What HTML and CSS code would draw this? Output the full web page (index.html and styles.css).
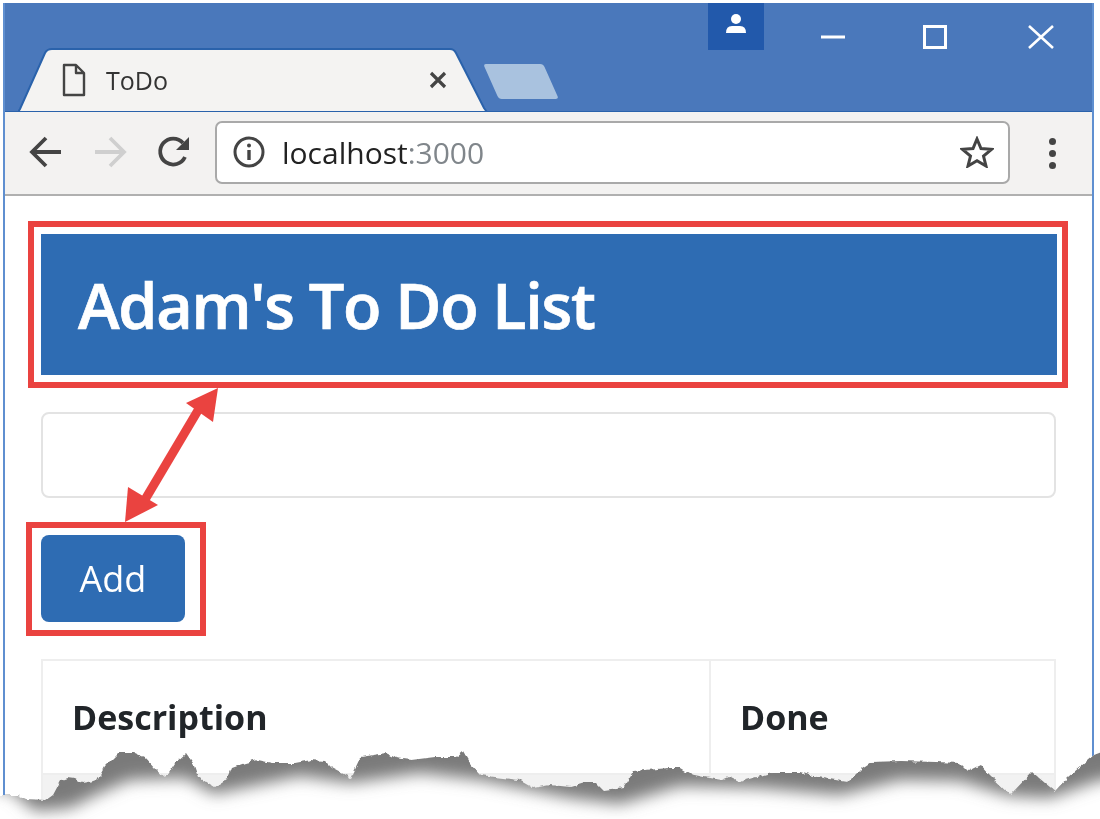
FILE: index.html
```html
<!DOCTYPE html>
<html lang="en">
<head>
    <meta charset="UTF-8">
    <title>ToDo</title>
    <link rel="stylesheet" href="styles.css">
</head>
<body>
    <div class="window">
        <div class="titlebar">
            <div class="tab">
                <svg class="tab-shape" width="470" height="64" viewBox="0 0 470 64">
                    <path d="M0 64 L2 61 L27 5 Q29 1 34 1 L432 1 Q436 1 438 5 L466 60 L469 64 Z" fill="#f4f3f2" stroke="#2a62ab" stroke-width="2"/>
                </svg>
                <svg class="tab-icon" width="24" height="34" viewBox="0 0 24 34">
                    <path d="M2 2 H14 L22 10 V32 H2 Z M14 2 V10 H22" fill="none" stroke="#444" stroke-width="2.4" stroke-linejoin="round"/>
                </svg>
                <span class="tab-title">ToDo</span>
                <svg class="tab-close" width="20" height="20" viewBox="0 0 20 20">
                    <path d="M3 3 L17 17 M17 3 L3 17" stroke="#444" stroke-width="3.2"/>
                </svg>
            </div>
            <div class="new-tab"></div>
            <div class="controls">
                <div class="avatar">
                    <svg width="24" height="22" viewBox="0 0 24 22">
                        <circle cx="12" cy="6" r="5" fill="#fff"/>
                        <path d="M2 20 Q2 13 8 13 H16 Q22 13 22 20 Z" fill="#fff"/>
                    </svg>
                </div>
                <svg class="control control-min" width="24" height="4" viewBox="0 0 24 4">
                    <path d="M0 2 H24" stroke="#fff" stroke-width="3"/>
                </svg>
                <svg class="control control-max" width="24" height="24" viewBox="0 0 24 24">
                    <rect x="1.5" y="1.5" width="21" height="21" fill="none" stroke="#fff" stroke-width="3"/>
                </svg>
                <svg class="control control-close" width="26" height="24" viewBox="0 0 26 24">
                    <path d="M1 1 L25 23 M25 1 L1 23" stroke="#fff" stroke-width="2.6"/>
                </svg>
            </div>
        </div>

        <div class="toolbar">
            <svg class="nav" width="34" height="32" viewBox="0 0 34 32">
                <path d="M32 16 H4 M17 2 L3 16 L17 30" fill="none" stroke="#444" stroke-width="3.8"/>
            </svg>
            <svg class="nav" width="34" height="32" viewBox="0 0 34 32">
                <path d="M2 16 H30 M17 2 L31 16 L17 30" fill="none" stroke="#cfcfcf" stroke-width="3.8"/>
            </svg>
            <svg class="nav" width="34" height="32" viewBox="0 0 34 32">
                <path d="M28 21 A13 13 0 1 1 26 7" fill="none" stroke="#444" stroke-width="3.8"/>
                <path d="M32 1 V14 H19 Z" fill="#444"/>
            </svg>
            <div class="address">
                <svg class="info" width="32" height="32" viewBox="0 0 32 32">
                    <circle cx="16" cy="16" r="14" fill="none" stroke="#444" stroke-width="3"/>
                    <path d="M16 14 V24" stroke="#444" stroke-width="3.4"/>
                    <circle cx="16" cy="9.5" r="2" fill="#444"/>
                </svg>
                <span class="host">localhost<span class="port">:3000</span></span>
                <svg class="star" width="34" height="32" viewBox="0 0 34 32">
                    <path d="M17 3 L21 12.5 L31.5 13.3 L23.5 20 L26 30 L17 24.7 L8 30 L10.5 20 L2.5 13.3 L13 12.5 Z" fill="none" stroke="#444" stroke-width="3"/>
                </svg>
            </div>
            <div class="menu">
                <i></i><i></i><i></i>
            </div>
        </div>

        <div class="page">
            <div class="callout callout-header">
                <h1 class="banner">Adam's To Do List</h1>
            </div>
            <input class="todo-input" type="text">
            <div class="callout callout-add">
                <button class="add-btn">Add</button>
            </div>
            <table class="todo-table">
                <thead>
                    <tr>
                        <th class="col-desc">Description</th>
                        <th>Done</th>
                    </tr>
                </thead>
                <tbody>
                    <tr>
                        <td>&nbsp;</td>
                        <td>&nbsp;</td>
                    </tr>
                </tbody>
            </table>
        </div>
    </div>

    <!-- arrow between the two callouts -->
    <svg class="overlay" width="1100" height="819" viewBox="0 0 1100 819">
        <path d="M200 407 L143 503" stroke="#ea4340" stroke-width="9"/>
        <path d="M218 388 L186 403 L213 422 Z" fill="#ea4340"/>
        <path d="M125 522 L128 487 L158 505 Z" fill="#ea4340"/>
    </svg>

    <!-- torn paper edge at the bottom -->
    <svg class="overlay" width="1100" height="819" viewBox="0 0 1100 819">
        <defs>
            <filter id="tornBlur" filterUnits="userSpaceOnUse" x="-50" y="680" width="1200" height="200">
                <feGaussianBlur stdDeviation="8"/>
            </filter>
            <filter id="tornRough" filterUnits="userSpaceOnUse" x="-50" y="700" width="1200" height="180">
                <feTurbulence type="fractalNoise" baseFrequency="0.16" numOctaves="2" seed="4"/>
                <feDisplacementMap in="SourceGraphic" scale="5" xChannelSelector="R" yChannelSelector="G"/>
            </filter>
            <polygon id="tornShape" filter="url(#tornRough)" points="-20,795 18,795 26,799 46,800 53,795 61,780 67,778 75,779 82,783 98,780 105,767 112,760 119,753 135,753 144,757 156,770 165,778 175,763 186,753 193,763 198,777 214,787 228,778 232,768 246,763 258,760 272,763 295,763 311,760 325,761 332,768 351,778 361,757 386,753 396,758 411,760 435,757 456,757 463,751 470,763 481,775 495,777 519,780 533,788 550,785 571,787 585,783 596,783 603,790 624,787 634,771 669,768 680,768 690,774 704,777 722,780 729,777 739,782 775,772 799,772 817,777 848,782 862,768 871,762 901,761 936,762 960,763 968,771 980,765 989,775 1010,795 1032,772 1045,783 1055,791 1068,777 1080,767 1094,755 1120,745 1120,860 -20,860"/>
            <mask id="tornMask" maskUnits="userSpaceOnUse" x="0" y="700" width="1100" height="119">
                <use href="#tornShape" fill="#fff"/>
            </mask>
        </defs>
        <use href="#tornShape" fill="#fff"/>
        <g mask="url(#tornMask)">
            <polygon class="torn-shadow" filter="url(#tornBlur)" points="-30,700 1130,700 1130,776 1100,780 1050,798 1010,796 960,781 900,780 840,795 760,788 680,786 620,804 570,798 520,788 480,780 420,773 351,783 300,776 214,794 186,778 130,780 100,793 70,808 35,811 10,790 -30,785"/>
        </g>
    </svg>
</body>
</html>
```

FILE: styles.css
```css
html, body {
    margin: 0;
    height: 100%;
    overflow: hidden;
    background-color: #fff;
}

body {
    position: relative;
    font-family: "Open Sans", "Noto Sans", sans-serif;
    filter: blur(0.6px);
}

.window {
    width: 1087px;
    height: 816px;
    margin: 3px 0 0 3px;
    border-left: 2px solid #5f8fd0;
    border-right: 2px solid #5f8fd0;
    overflow: hidden;
}

/* title bar */
.titlebar {
    display: flex;
    align-items: flex-end;
    position: relative;
    height: 109px;
    background-color: #4a78bb;
    border-bottom: 1px solid #2a62ab;
    box-sizing: border-box;
}

.tab {
    position: relative;
    display: flex;
    align-items: center;
    box-sizing: border-box;
    width: 470px;
    height: 64px;
    margin-left: 13px;
    margin-bottom: -1px;
    padding-left: 44px;
}

.tab-shape {
    position: absolute;
    left: 0;
    top: 0;
}

.tab-icon, .tab-title, .tab-close {
    position: relative;
}

.tab-title {
    margin-left: 20px;
    font-size: 25px;
    color: #333;
}

.tab-close {
    margin-left: 260px;
}

.new-tab {
    width: 60px;
    height: 35px;
    margin-left: 3px;
    margin-bottom: 12px;
    background-color: #a9c2df;
    transform: skewX(24deg);
    border-radius: 3px;
}

.controls {
    position: absolute;
    top: 0;
    right: 0;
    display: flex;
    align-items: flex-start;
}

.avatar {
    display: flex;
    justify-content: center;
    width: 56px;
    height: 47px;
    padding-top: 10px;
    box-sizing: border-box;
    background-color: #2259ab;
}

.control-min {
    margin-left: 57px;
    margin-top: 32px;
}

.control-max {
    margin-left: 78px;
    margin-top: 22px;
}

.control-close {
    margin-left: 81px;
    margin-top: 22px;
    margin-right: 38px;
}

/* toolbar */
.toolbar {
    display: flex;
    align-items: center;
    box-sizing: border-box;
    height: 84px;
    padding: 0 0 2px 24px;
    background-color: #f3f2f1;
    border-bottom: 2px solid #b0b0b0;
}

.nav {
    margin-right: 30px;
}

.address {
    display: flex;
    align-items: center;
    box-sizing: border-box;
    width: 795px;
    height: 63px;
    margin-left: -6px;
    padding: 0 14px 0 16px;
    background-color: #fff;
    border: 2px solid #a9a9a9;
    border-radius: 7px;
}

.host {
    margin-left: 17px;
    font-size: 30px;
    color: #222;
}

.port {
    color: #80868b;
}

.star {
    margin-left: auto;
}

.menu {
    display: flex;
    flex-direction: column;
    gap: 5px;
    margin-left: 39px;
    padding-top: 2px;
}

.menu i {
    width: 7px;
    height: 7px;
    border-radius: 50%;
    background-color: #444;
}

/* page content */
.page {
    padding-top: 25px;
}

.callout {
    border: 6px solid #ea4340;
    box-sizing: border-box;
}

.callout-header {
    width: 1040px;
    height: 167px;
    margin-left: 23px;
    padding: 7px 5px 7px 7px;
    margin-bottom: 24px;
}

.banner {
    display: flex;
    align-items: center;
    height: 100%;
    margin: 0;
    padding-left: 37px;
    box-sizing: border-box;
    background-color: #2e6cb3;
    color: #fff;
    font-size: 63px;
    font-weight: 600;
    letter-spacing: -1.3px;
    -webkit-text-stroke: 0.7px #fff;
}

.todo-input {
    display: block;
    box-sizing: border-box;
    width: 1015px;
    height: 86px;
    margin: 0 0 24px 36px;
    background-color: #fff;
    border: 2px solid #e3e3e3;
    border-radius: 8px;
}

.callout-add {
    width: 180px;
    height: 114px;
    margin-left: 21px;
    padding: 7px 9px;
    margin-bottom: 23px;
}

.add-btn {
    display: block;
    width: 144px;
    height: 87px;
    border: none;
    border-radius: 8px;
    background-color: #2e6cb3;
    color: #fff;
    font-family: inherit;
    font-size: 36px;
}

.todo-table {
    width: 1015px;
    margin-left: 36px;
    border-collapse: collapse;
    font-size: 34px;
    color: #212529;
}

.todo-table th, .todo-table td {
    padding: 0 29px;
    height: 112px;
    border: 2px solid #eee;
    text-align: left;
}

.col-desc {
    width: 608px;
}

.todo-table tbody tr {
    background-color: #f2f2f2;
}

/* overlays */
.overlay {
    position: absolute;
    left: 0;
    top: 0;
}

.torn-shadow {
    fill: #7a7a7a;
}
```
